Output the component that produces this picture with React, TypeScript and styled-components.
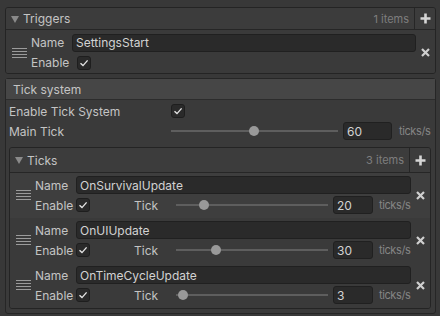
import React from "react";
import styled, { createGlobalStyle } from "styled-components";

const MIN = 1;
const MAX = 120;

const GlobalStyle = createGlobalStyle`
  html, body { margin: 0; padding: 0; background: #383838; }
  body {
    font-family: Inter, "Noto Sans", sans-serif;
    font-size: 12px;
    color: #c4c4c4;
    width: 440px;
    height: 316px;
    overflow: hidden;
  }
  * { box-sizing: border-box; }
`;

const Page = styled.div`
  display: flex;
  flex-direction: column;
  padding: 7px 4px 0 5px;
`;

const ListBox = styled.div`
  border: 1px solid #242424;
  border-radius: 3px;
  background: #3a3a3a;
  display: flex;
  flex-direction: column;
  overflow: hidden;
`;

const ListHeader = styled.div<{ $h: number }>`
  height: ${(p) => p.$h}px;
  display: flex;
  align-items: center;
  background: #3c3c3c;
  border-bottom: 1px solid #262626;
  padding-left: 5px;
`;

const Triangle = styled.span`
  width: 0;
  height: 0;
  border-left: 4px solid transparent;
  border-right: 4px solid transparent;
  border-top: 7px solid #8a8a8a;
  margin-right: 4px;
  margin-top: 1px;
`;

const HeaderTitle = styled.span`
  flex: 1;
  color: #c4c4c4;
`;

const Count = styled.span`
  font-size: 11px;
  color: #7e7e7e;
  padding-right: 5px;
`;

const PlusButton = styled.div`
  width: 21px;
  align-self: stretch;
  border-left: 1px solid #262626;
  display: flex;
  align-items: center;
  justify-content: center;
`;

const Row = styled.div<{ $alt?: boolean }>`
  display: flex;
  align-items: center;
  background: ${(p) => (p.$alt ? "#3e3e3e" : "#3a3a3a")};
`;

const TriggerBody = styled(Row)`
  padding-top: 2px;
  height: 43px;
`;

const HandleCell = styled.div`
  width: 25px;
  padding-left: 6px;
  align-self: stretch;
  display: flex;
  align-items: center;
`;

const Handle = styled.div`
  width: 15px;
  display: flex;
  flex-direction: column;
  gap: 2px;
  & > span {
    display: block;
    height: 1px;
    background: #9b9b9b;
  }
`;

const Fields = styled.div`
  flex: 1;
  display: flex;
  flex-direction: column;
  min-width: 0;
`;

const FieldRow = styled.div`
  height: 20px;
  display: flex;
  align-items: center;
`;

const Label = styled.span<{ $w: number }>`
  width: ${(p) => p.$w}px;
  flex: none;
  white-space: nowrap;
  color: #c4c4c4;
`;

const TextField = styled.div<{ $w?: number }>`
  ${(p) => (p.$w ? `width: ${p.$w}px; flex: none;` : "flex: 1;")}
  height: 18px;
  background: #2a2a2a;
  border: 1px solid #202020;
  border-radius: 3px;
  padding-left: 3px;
  display: flex;
  align-items: center;
  color: #d2d2d2;
  white-space: nowrap;
`;

const CheckBox = styled.div`
  width: 14px;
  height: 14px;
  flex: none;
  background: #2a2a2a;
  border: 1px solid #1e1e1e;
  border-radius: 3px;
  display: flex;
  align-items: center;
  justify-content: center;
`;

const CheckCell = styled.div<{ $w: number }>`
  width: ${(p) => p.$w}px;
  flex: none;
  display: flex;
  align-items: center;
`;

const RemoveCell = styled.div`
  width: 19px;
  align-self: stretch;
  display: flex;
  align-items: center;
  justify-content: center;
`;

const SliderWrap = styled.div`
  flex: 1;
  height: 20px;
  position: relative;
  display: flex;
  align-items: center;
`;

const Track = styled.div`
  width: 100%;
  height: 2px;
  background: #5e5e5e;
`;

const Thumb = styled.div`
  position: absolute;
  top: 5px;
  width: 10px;
  height: 10px;
  border-radius: 50%;
  background: #999999;
`;

const Unit = styled.span`
  width: 32px;
  flex: none;
  font-size: 11px;
  letter-spacing: -0.4px;
  color: #858585;
  white-space: nowrap;
`;

const Section = styled.div`
  margin-top: 4px;
  border: 1px solid #262626;
  border-radius: 3px;
  background: #3a3a3a;
  display: flex;
  flex-direction: column;
`;

const SectionHeader = styled.div`
  height: 21px;
  background: #464646;
  border-bottom: 1px solid #2c2c2c;
  padding-left: 7px;
  display: flex;
  align-items: center;
  color: #c4c4c4;
`;

const SectionBody = styled.div`
  padding: 1px 4px 4px 3px;
  display: flex;
  flex-direction: column;
`;

const TicksBox = styled(ListBox)`
  margin-top: 6px;
`;

const TicksRow = styled(Row)`
  padding-top: 2px;
  padding-bottom: 3px;
`;

const Gap = styled.span<{ $w: number }>`
  width: ${(p) => p.$w}px;
  flex: none;
`;

const Check = () => (
  <svg width="10" height="10" viewBox="0 0 10 10">
    <path d="M1.5 5.2 L4 7.6 L8.6 2.4" fill="none" stroke="#e4e4e4" strokeWidth="1.4" />
  </svg>
);

const Plus = () => (
  <svg width="11" height="11" viewBox="0 0 11 11">
    <path d="M5.5 0.5 V10.5 M0.5 5.5 H10.5" stroke="#d6d6d6" strokeWidth="2.6" />
  </svg>
);

const Cross = () => (
  <svg width="9" height="9" viewBox="0 0 9 9">
    <path d="M1 1 L8 8 M8 1 L1 8" stroke="#cfcfcf" strokeWidth="2.2" />
  </svg>
);

const DragHandle = () => (
  <Handle>
    <span />
    <span />
    <span />
    <span />
  </Handle>
);

const Slider = ({ value }: { value: number }) => {
  const frac = (value - MIN) / (MAX - MIN);
  return (
    <SliderWrap>
      <Track />
      <Thumb style={{ left: `calc((100% - 10px) * ${frac})` }} />
    </SliderWrap>
  );
};

const ticks = [
  { name: "OnSurvivalUpdate", tick: 20 },
  { name: "OnUIUpdate", tick: 30 },
  { name: "OnTimeCycleUpdate", tick: 3 },
];

export default function App() {
  return (
    <>
      <GlobalStyle />
      <Page>
        <ListBox>
          <ListHeader $h={22}>
            <Triangle />
            <HeaderTitle>Triggers</HeaderTitle>
            <Count>1 items</Count>
            <PlusButton>
              <Plus />
            </PlusButton>
          </ListHeader>
          <TriggerBody>
            <HandleCell>
              <DragHandle />
            </HandleCell>
            <Fields>
              <FieldRow>
                <Label $w={41}>Name</Label>
                <TextField>SettingsStart</TextField>
              </FieldRow>
              <FieldRow>
                <Label $w={46}>Enable</Label>
                <CheckBox>
                  <Check />
                </CheckBox>
              </FieldRow>
            </Fields>
            <RemoveCell>
              <Cross />
            </RemoveCell>
          </TriggerBody>
        </ListBox>

        <Section>
          <SectionHeader>Tick system</SectionHeader>
          <SectionBody>
            <FieldRow>
              <Label $w={162}>Enable Tick System</Label>
              <CheckBox>
                <Check />
              </CheckBox>
            </FieldRow>
            <FieldRow>
              <Label $w={162}>Main Tick</Label>
              <Slider value={60} />
              <Gap $w={5} />
              <TextField $w={49}>60</TextField>
              <Gap $w={7} />
              <Unit>ticks/s</Unit>
            </FieldRow>

            <TicksBox>
              <ListHeader $h={25}>
                <Triangle />
                <HeaderTitle>Ticks</HeaderTitle>
                <Count>3 items</Count>
                <PlusButton>
                  <Plus />
                </PlusButton>
              </ListHeader>
              {ticks.map((t, i) => (
                <TicksRow key={t.name} $alt={i === 0}>
                  <HandleCell>
                    <DragHandle />
                  </HandleCell>
                  <Fields>
                    <FieldRow>
                      <Label $w={41}>Name</Label>
                      <TextField>{t.name}</TextField>
                    </FieldRow>
                    <FieldRow>
                      <Label $w={41}>Enable</Label>
                      <CheckCell $w={58}>
                        <CheckBox>
                          <Check />
                        </CheckBox>
                      </CheckCell>
                      <Label $w={42}>Tick</Label>
                      <Slider value={t.tick} />
                      <Gap $w={5} />
                      <TextField $w={40}>{t.tick}</TextField>
                      <Gap $w={6} />
                      <Unit>ticks/s</Unit>
                    </FieldRow>
                  </Fields>
                  <RemoveCell>
                    <Cross />
                  </RemoveCell>
                </TicksRow>
              ))}
            </TicksBox>
          </SectionBody>
        </Section>
      </Page>
    </>
  );
}
